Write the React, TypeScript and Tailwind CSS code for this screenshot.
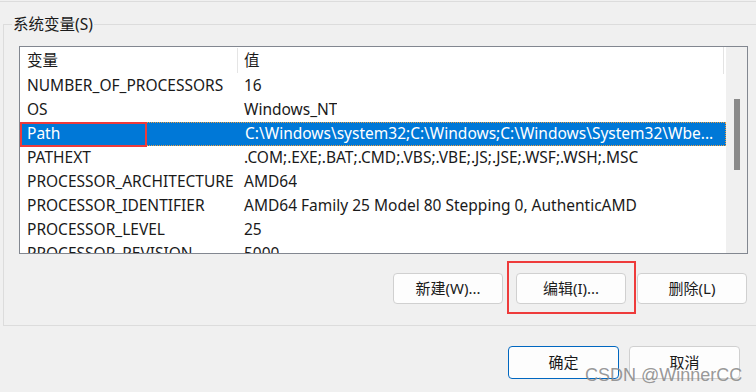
const rows = [
  ['NUMBER_OF_PROCESSORS', '16'],
  ['OS', 'Windows_NT'],
  ['Path', 'C:\\Windows\\system32;C:\\Windows;C:\\Windows\\System32\\Wbe...'],
  ['PATHEXT', '.COM;.EXE;.BAT;.CMD;.VBS;.VBE;.JS;.JSE;.WSF;.WSH;.MSC'],
  ['PROCESSOR_ARCHITECTURE', 'AMD64'],
  ['PROCESSOR_IDENTIFIER', 'AMD64 Family 25 Model 80 Stepping 0, AuthenticAMD'],
  ['PROCESSOR_LEVEL', '25'],
  ['PROCESSOR_REVISION', '5000'],
]

function Btn({ label, primary }: { label: string; primary?: boolean }) {
  return (
    <button
      className={
        'w-[111px] h-[33px] rounded-[4px] bg-[#fdfdfd] text-[15px] text-[#1a1a1a] border ' +
        (primary ? 'border-[#0067c0]' : 'border-[#d0d0d0]')
      }
    >
      {label}
    </button>
  )
}

export default function App() {
  return (
    <div
      className="relative w-[756px] h-[392px] overflow-hidden bg-[#f0f0f0] text-[#1a1a1a]"
      style={{ fontFamily: '"Noto Sans", "Noto Sans CJK SC", sans-serif' }}
    >
      <div className="mt-px h-px bg-[#dcdcdc]" />

      {/* 系统变量 group */}
      <fieldset className="ml-[3px] mt-[12px] border border-r-0 border-[#dcdcdc] pb-[21px]">
        <legend className="ml-[8px] px-px text-[15.5px] leading-[20px]">系统变量(S)</legend>

        <div className="ml-[15px] mt-[12px] w-[729px] h-[208px] border border-[#828790] bg-white flex overflow-hidden">
          <div className="w-[706px] flex flex-col text-[15.5px]">
            {/* header */}
            <div className="flex h-[27px] shrink-0 items-center">
              <div className="w-[218px] h-[25px] pl-[7px] border-r border-[#e5e5e5] flex items-center">变量</div>
              <div className="w-[486px] h-[27px] pl-[6px] border-r border-[#e3e3e3] flex items-center">值</div>
            </div>
            {rows.map(([name, value]) => {
              const sel = name === 'Path'
              return (
                <div
                  key={name}
                  className={
                    'relative flex h-[24px] shrink-0 items-center whitespace-nowrap ' +
                    (sel ? 'bg-[#0078d7] text-white border border-dotted border-[#f0a040]' : '')
                  }
                >
                  <div className={'w-[218px] ' + (sel ? 'pl-[6px]' : 'pl-[7px]')}>{name}</div>
                  <div className="pl-[6px] overflow-hidden">{value}</div>
                  {sel && (
                    <div className="absolute left-[-1px] top-[-1px] w-[127px] h-[25px] border-2 border-[#ee3b3b]" />
                  )}
                </div>
              )
            })}
          </div>
          {/* scrollbar */}
          <div className="w-[21px] bg-[#f0f0f0] flex justify-center pt-[52px]">
            <div className="w-[6px] h-[71px] bg-[#8a8a8a]" />
          </div>
        </div>

        <div className="flex mt-[19px] pl-[389px]">
          <button className="w-[110px] h-[31px] rounded-[4px] bg-[#fdfdfd] border border-[#d0d0d0] text-[15px]">
            新建(W)...
          </button>
          <div className="relative ml-[13px]">
            <button className="w-[110px] h-[31px] rounded-[4px] bg-[#fdfdfd] border border-[#d0d0d0] text-[15px]">
              编辑(I)...
            </button>
            <div className="absolute left-[-9px] top-[-12px] w-[129px] h-[53px] border-2 border-[#ee3b3b]" />
          </div>
          <button className="ml-[11px] w-[110px] h-[31px] rounded-[4px] bg-[#fdfdfd] border border-[#d0d0d0] text-[15px]">
            删除(L)
          </button>
        </div>
      </fieldset>

      <div className="flex justify-end gap-[10px] mt-[20px] pr-[16px]">
        <Btn label="确定" primary />
        <Btn label="取消" />
      </div>

      <div
        className="absolute left-[585px] top-[362px] text-[18px] text-[#8c8c8c]/90"
        style={{ fontFamily: '"Liberation Sans", sans-serif' }}
      >
        CSDN @WinnerCC
      </div>
    </div>
  )
}
